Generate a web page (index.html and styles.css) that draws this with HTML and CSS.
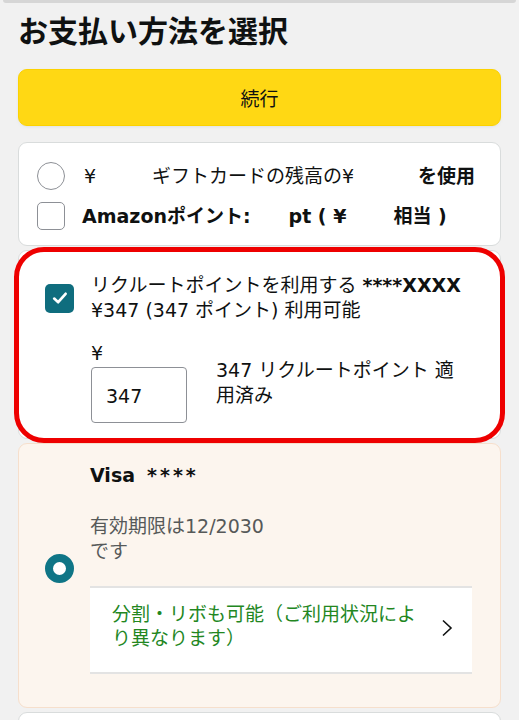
FILE: index.html
```html
<!DOCTYPE html>
<html lang="ja">
<head>
<meta charset="utf-8">
<title>お支払い方法を選択</title>
<link rel="stylesheet" href="styles.css">
</head>
<body>
<div class="topbar"></div>
<main class="page">
  <h1 class="title">お支払い方法を選択</h1>
  <button class="continue">続行</button>

  <section class="card card-balance">
    <div class="row">
      <span class="radio"></span>
      <span class="yen">¥</span>
      <span class="gc-label">ギフトカードの残高の¥</span>
      <span class="use bold">を使用</span>
    </div>
    <div class="row">
      <span class="checkbox"></span>
      <span class="bold amz">Amazonポイント:</span>
      <span class="bold pt">pt ( ¥</span>
      <span class="bold eq">相当 )</span>
    </div>
  </section>

  <section class="card card-recruit">
    <div class="rc-head">
      <span class="checkbox checked">
        <svg viewBox="0 0 18 18" width="18" height="18"><polyline points="3.2,9.6 7.2,13.2 14.6,4.8" fill="none" stroke="#fff" stroke-width="2.7" stroke-linecap="round" stroke-linejoin="round"/></svg>
      </span>
      <div class="rc-text">
        <div>リクルートポイントを利用する <b>****XXXX</b></div>
        <div>¥347 (347 ポイント) 利用可能</div>
      </div>
    </div>
    <div class="rc-apply">
      <div class="amount">
        <div class="amount-label">¥</div>
        <div class="amount-input">347</div>
      </div>
      <div class="applied">347 リクルートポイント 適用済み</div>
    </div>
  </section>

  <section class="card card-visa">
    <span class="radio selected"></span>
    <div class="visa-body">
      <div class="visa-name"><b>Visa</b> <span class="stars">****</span></div>
      <div class="expiry">有効期限は12/2030です</div>
      <div class="installment">
        <span class="inst-text">分割・リボも可能（ご利用状況により異なります）</span>
        <svg class="chev" viewBox="0 0 12 18" width="12" height="18"><polyline points="2,1.5 10,9 2,16.5" fill="none" stroke="#0f1111" stroke-width="1.6"/></svg>
      </div>
    </div>
  </section>

  <section class="card card-next"></section>
</main>
</body>
</html>
```

FILE: styles.css
```css
* { box-sizing: border-box; }

html, body {
  margin: 0;
  padding: 0;
  background: #f1f1f1;
}

body {
  font-family: "DejaVu Sans", "Noto Sans CJK JP", sans-serif;
  color: #0f1111;
  font-size: 19px;
  line-height: 25px;
  overflow: hidden;
}

.topbar {
  height: 3px;
  margin: 0 3px;
  background: #d6d6d6;
  border-radius: 0 0 3px 3px;
}

.page {
  padding: 0 18px;
  display: flex;
  flex-direction: column;
}

.title {
  margin: 8px 0 22px;
  font-family: "Noto Sans CJK JP", sans-serif;
  font-size: 30px;
  line-height: 36px;
  font-weight: 700;
}

.continue {
  height: 57px;
  border: 1px solid #fcd200;
  background: #ffd814;
  border-radius: 9px;
  font-family: "Noto Sans CJK JP", sans-serif;
  font-size: 19px;
  color: #0f1111;
  box-shadow: 0 1px 2px rgba(213, 217, 217, 0.5);
}

.card {
  background: #fff;
  border: 1px solid #d9dcdc;
  border-radius: 9px;
}

.card-balance {
  margin-top: 16px;
  padding: 19px 25px 15px 18px;
  display: flex;
  flex-direction: column;
  gap: 12px;
}

.row {
  display: flex;
  align-items: center;
  height: 28px;
}

.bold { font-weight: 700; }

.radio {
  width: 28px;
  height: 28px;
  border-radius: 50%;
  border: 1px solid #8d9096;
  background: #fff;
  flex: none;
}

.checkbox {
  width: 28px;
  height: 28px;
  border-radius: 5px;
  border: 1px solid #8d9096;
  background: #fff;
  flex: none;
  display: flex;
  align-items: center;
  justify-content: center;
}

.yen { margin-left: 19px; }
.gc-label { margin-left: 56px; }
.use { margin-left: auto; }
.amz { margin-left: 17px; }
.pt { margin-left: 38px; }
.eq { margin-left: 47px; }

.card-recruit {
  position: relative;
  margin-top: 4px;
  padding: 22px 26px 15px 26px;
}

.card-recruit::after {
  content: "";
  position: absolute;
  top: -4px;
  left: -5px;
  right: -5px;
  bottom: -5px;
  border: 5px solid #ee0000;
  border-radius: 30px;
  pointer-events: none;
}

.rc-head {
  display: flex;
  align-items: center;
  gap: 17px;
}

.checkbox.checked {
  width: 29px;
  height: 29px;
  border: none;
  background: #0f6d7e;
}

.rc-apply {
  margin-top: 20px;
  padding-left: 46px;
  display: flex;
  align-items: center;
}

.amount-label {
  line-height: 20px;
  margin-bottom: 4px;
}

.amount-input {
  width: 96px;
  height: 56px;
  border: 1.5px solid #8d9096;
  border-radius: 4px;
  padding-left: 14px;
  display: flex;
  align-items: center;
  padding-top: 2px;
}

.applied {
  margin-left: 29px;
  width: 244px;
}

.card-visa {
  margin-top: 4px;
  background: #fcf5ee;
  border-color: #f6dfcc;
  padding: 19px 28px 33px 26px;
  display: flex;
  align-items: center;
  gap: 16px;
}

.radio.selected {
  width: 29px;
  height: 29px;
  border: 8.5px solid #0f7586;
  background: #fff;
}

.visa-body {
  flex: 1;
  display: flex;
  flex-direction: column;
}

.stars {
  margin-left: 6px;
  font-weight: 700;
  letter-spacing: 3px;
}

.expiry {
  margin-top: 26px;
  color: #565959;
  max-width: 182px;
}

.installment {
  margin-top: 22px;
  background: #fff;
  border-top: 2px solid #e3e3e3;
  border-bottom: 2px solid #e3e3e3;
  padding: 14px 19px 22px 22px;
  display: flex;
  align-items: center;
  gap: 18px;
  line-height: 24px;
}

.inst-text {
  flex: 1;
  color: #23871f;
}

.chev {
  flex: none;
  margin-top: 4px;
}

.card-next {
  margin-top: 4px;
  height: 80px;
}
```
